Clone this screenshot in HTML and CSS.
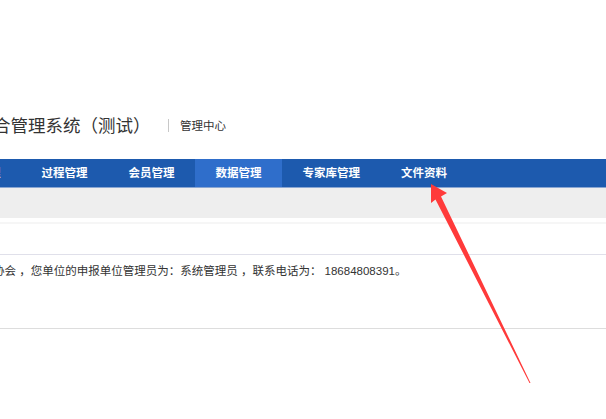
FILE: index.html
```html
<!DOCTYPE html>
<html>
<head>
  <link rel="stylesheet" href="styles.css">
</head>
<body>
  <div class="page">
    <div class="brand">
      <div class="title">项目综合管理系统（测试）</div>
      <div class="sep"></div>
      <div class="sub">管理中心</div>
    </div>

    <div class="nav">
      <a>申报管理</a>
      <a>过程管理</a>
      <a>会员管理</a>
      <a class="active">数据管理</a>
      <a>专家库管理</a>
      <a>文件资料</a>
    </div>

    <div class="crumbs"></div>

    <div class="panel">
      <div class="panel-head"></div>
      <div class="panel-body">欢迎来到协会 ，您单位的申报单位管理员为：系统管理员 ，联系电话为： 18684808391。</div>
    </div>
  </div>

  <svg class="mark" width="606" height="419" viewBox="0 0 606 419">
    <polygon points="431,184 447,193 441,196.5 530.5,383 529.5,383 435.5,199.5 431,203" fill="#ff3a3a"/>
  </svg>
</body>
</html>
```

FILE: styles.css
```css
html, body {
  margin: 0;
  padding: 0;
  background: #fff;
  overflow: hidden;
}
body {
  font-family: "Liberation Sans", "Noto Sans CJK SC", sans-serif;
  color: #333;
  width: 606px;
  height: 419px;
  position: relative;
}
.page {
  margin-left: -66px;
  width: 760px;
}
.brand {
  display: flex;
  align-items: center;
  height: 24px;
  margin-top: 112px;
  margin-bottom: 23px;
  padding-left: 6.5px;
}
.title {
  font-size: 17.5px;
  color: #333;
  white-space: nowrap;
}
.sep {
  width: 1px;
  height: 13px;
  background: #c8c8c8;
  margin: 2px 11px 0 17.5px;
}
.sub {
  font-size: 11.5px;
  color: #333;
  margin-top: 2px;
}
.nav {
  display: flex;
  height: 28px;
  background: #1d5aae;
  border-bottom: 1px solid #8aa6d2;
}
.nav a {
  padding: 0 20.5px;
  line-height: 28px;
  font-size: 11.5px;
  font-weight: bold;
  color: #fff;
  white-space: nowrap;
}
.nav a.active {
  background: #2f6ecb;
}
.crumbs {
  height: 30px;
  background: #eeeeee;
}
.panel {
  margin-top: 4px;
  border-top: 2px solid #f6f6f6;
}
.panel-head {
  height: 30px;
  border-bottom: 1px solid #e0e0ea;
}
.panel-body {
  padding: 6px 13px 47px;
  line-height: 20px;
  font-size: 11.5px;
  color: #333;
  white-space: nowrap;
  border-bottom: 1px solid #dddddd;
}
.mark {
  position: absolute;
  top: 0;
  left: 0;
  pointer-events: none;
}
```
